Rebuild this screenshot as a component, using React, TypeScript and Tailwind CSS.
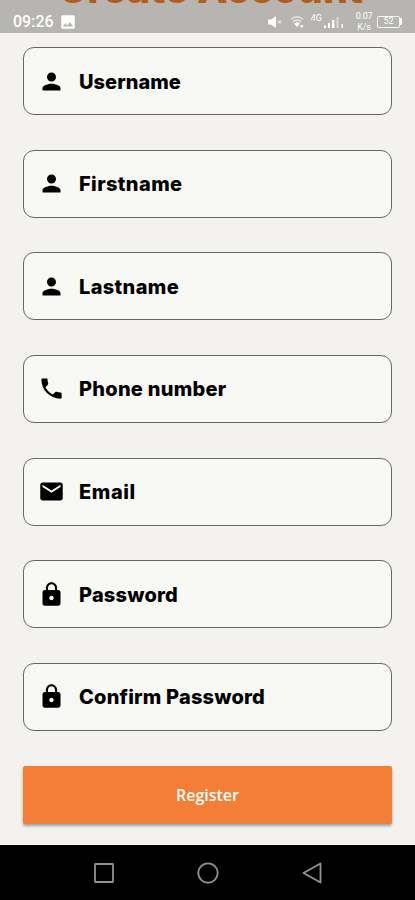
import type { IconType } from "react-icons";
import { MdEmail, MdImage, MdLock, MdPerson, MdPhone } from "react-icons/md";

interface Field {
  label: string;
  icon: IconType;
  tracking: string;
}

const FIELDS: Field[] = [
  { label: "Username", icon: MdPerson, tracking: "tracking-[0.05px]" },
  { label: "Firstname", icon: MdPerson, tracking: "tracking-[0.4px]" },
  { label: "Lastname", icon: MdPerson, tracking: "tracking-[0.35px]" },
  { label: "Phone number", icon: MdPhone, tracking: "tracking-[0.25px]" },
  { label: "Email", icon: MdEmail, tracking: "tracking-[0.6px]" },
  { label: "Password", icon: MdLock, tracking: "tracking-[0.2px]" },
  { label: "Confirm Password", icon: MdLock, tracking: "tracking-[0.2px]" },
];

function StatusBar() {
  return (
    <div className="absolute inset-x-0 top-0 h-[33px] bg-black/25 text-white flex justify-between px-[13px] pt-[10px]">
      <div className="flex h-[23px] items-center gap-[5px]">
        <span className="font-[Roboto,sans-serif] text-[16px] leading-none font-medium">
          09:26
        </span>
        <MdImage className="w-[18px] h-[18px]" />
      </div>
      <div className="flex h-[23px] items-center">
        {/* muted speaker */}
        <svg viewBox="0 0 14 12" className="w-[14px] h-[12px] mr-[8px]">
          <path d="M0 3.5h3L8 0v12L3 8.5H0z" fill="currentColor" />
          <path d="M10 4.5l3 3m0-3l-3 3" stroke="currentColor" />
        </svg>
        {/* wifi */}
        <svg viewBox="0 0 15 13" className="w-[15px] h-[13px] mr-[6px]">
          <path
            d="M1 4.2q6-5 12 0M3 6.6q4-3.2 8 0"
            fill="none"
            stroke="currentColor"
            strokeWidth="1.4"
            opacity="0.7"
          />
          <path d="M4 8.5Q7 6 10 8.5L7 12z" fill="currentColor" />
          <path d="M10.5 10h2.5v2.5h-2.5z" fill="currentColor" />
        </svg>
        <span className="font-[Roboto,sans-serif] text-[9px] leading-none self-start mt-[4px] mr-[2px]">
          4G
        </span>
        {/* signal bars */}
        <svg viewBox="0 0 20 12" className="w-[20px] h-[12px] mr-[11px]">
          <path
            d="M0 9.5h2V12H0zM4 7h2v5H4zM8 4h2.5v8H8zM17.5 8H19v4h-1.5z"
            fill="currentColor"
          />
          <path d="M12.5 1h2v11h-2z" fill="currentColor" opacity="0.5" />
        </svg>
        <div className="w-[18px] mr-[4px] font-[Roboto,sans-serif] text-[9px] leading-[11px] text-center tracking-[-0.2px]">
          <div>0.07</div>
          <div>K/s</div>
        </div>
        <div className="flex items-center">
          <div className="w-[23px] h-[12px] border border-white/90 rounded-[2px] flex items-center justify-center font-[Roboto,sans-serif] text-[9px] leading-none">
            52
          </div>
          <div className="w-[2px] h-[7px] bg-white rounded-r-[1px]" />
        </div>
      </div>
    </div>
  );
}

function NavigationBar() {
  return (
    <div className="h-[55px] shrink-0 bg-black text-[#929292] flex justify-center gap-[80px] items-center">
      <svg viewBox="0 0 24 24" className="w-6 h-6" fill="none">
        <rect
          x="3"
          y="3"
          width="18"
          height="18"
          rx="0.5"
          stroke="currentColor"
          strokeWidth="1.8"
        />
      </svg>
      <svg viewBox="0 0 24 24" className="w-6 h-6" fill="none">
        <circle
          cx="12"
          cy="12"
          r="9.7"
          stroke="currentColor"
          strokeWidth="1.8"
        />
      </svg>
      <svg viewBox="0 0 24 24" className="w-6 h-6" fill="none">
        <path
          d="M20.5 2.5v19L3.5 12z"
          stroke="currentColor"
          strokeWidth="1.8"
          strokeLinejoin="round"
        />
      </svg>
    </div>
  );
}

export default function App() {
  return (
    <div className="relative w-[415px] h-[900px] overflow-hidden flex flex-col bg-[#f3f2ee] font-[Inter,sans-serif]">
      <main className="flex-1 px-[23px] overflow-hidden">
        {/* heading is scrolled up beneath the status bar */}
        <h1 className="-mt-[37px] h-[84px] pl-[6px] text-center text-[39.5px] leading-[52px] font-extrabold text-[#f47a24] whitespace-nowrap">
          Create Account
        </h1>
        <form className="flex flex-col gap-[34.65px]">
          {FIELDS.map(({ label, icon: Icon, tracking }) => (
            <label
              key={label}
              className="h-[68px] shrink-0 flex items-center pl-[13.5px] rounded-[11px] border border-[#666663] bg-[#f8f8f4] text-black"
            >
              <Icon className="w-[27px] h-[27px]" />
              <span
                className={`ml-[14.5px] pt-px text-[20px] font-extrabold leading-none ${tracking}`}
              >
                {label}
              </span>
            </label>
          ))}
          <button
            type="button"
            className="mt-px h-[58px] shrink-0 rounded-[2px] bg-[#f47e35] text-white font-['Open_Sans',sans-serif] text-[16px] font-semibold shadow-[0_2px_3px_rgba(0,0,0,0.35)]"
          >
            Register
          </button>
        </form>
      </main>
      <NavigationBar />
      <StatusBar />
    </div>
  );
}
